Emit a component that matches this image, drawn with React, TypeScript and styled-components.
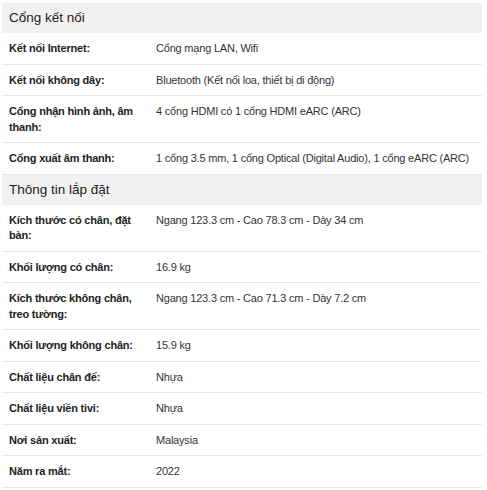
import React from 'react'
import styled, { createGlobalStyle } from 'styled-components'

const GlobalStyle = createGlobalStyle`
body {
  margin: 0;
  background: #fff;
  font-family: "Liberation Sans", Arial, sans-serif;
}
`

const Wrapper = styled.div`
padding: 3px 5px 0 2px;
`

const Table = styled.div`
width: 480px;
display: flex;
flex-direction: column;
`

const GroupTitle = styled.div`
background-color: #f1f1f1;
color: #222;
font-size: 13.5px;
line-height: 30px;
height: 30px;
padding: 0 7px;
`

const Row = styled.div`
display: grid;
grid-template-columns: 147px 1fr;
border-bottom: 1px solid #e6e6e6;
padding: 8px 0 7px 7px;
font-size: 11px;
line-height: 15.5px;
letter-spacing: -0.2px;
`

const Label = styled.div`
color: #222;
font-weight: 600;
padding-right: 8px;
`

const Value = styled.div`
color: #333;
`

type Spec = { label: string; value: string }

const groups: { title: string; specs: Spec[] }[] = [
  {
    title: 'Cổng kết nối',
    specs: [
      { label: 'Kết nối Internet:', value: 'Cổng mạng LAN, Wifi' },
      { label: 'Kết nối không dây:', value: 'Bluetooth (Kết nối loa, thiết bị di động)' },
      { label: 'Cổng nhận hình ảnh, âm thanh:', value: '4 cổng HDMI có 1 cổng HDMI eARC (ARC)' },
      { label: 'Cổng xuất âm thanh:', value: '1 cổng 3.5 mm, 1 cổng Optical (Digital Audio), 1 cổng eARC (ARC)' },
    ],
  },
  {
    title: 'Thông tin lắp đặt',
    specs: [
      { label: 'Kích thước có chân, đặt bàn:', value: 'Ngang 123.3 cm - Cao 78.3 cm - Dày 34 cm' },
      { label: 'Khối lượng có chân:', value: '16.9 kg' },
      { label: 'Kích thước không chân, treo tường:', value: 'Ngang 123.3 cm - Cao 71.3 cm - Dày 7.2 cm' },
      { label: 'Khối lượng không chân:', value: '15.9 kg' },
      { label: 'Chất liệu chân đế:', value: 'Nhựa' },
      { label: 'Chất liệu viền tivi:', value: 'Nhựa' },
      { label: 'Nơi sản xuất:', value: 'Malaysia' },
      { label: 'Năm ra mắt:', value: '2022' },
    ],
  },
]

export default function App() {
  return (
    <Wrapper>
      <GlobalStyle />
      <Table>
        {groups.map((group) => (
          <React.Fragment key={group.title}>
            <GroupTitle>{group.title}</GroupTitle>
            {group.specs.map((spec) => (
              <Row key={spec.label}>
                <Label>{spec.label}</Label>
                <Value>{spec.value}</Value>
              </Row>
            ))}
          </React.Fragment>
        ))}
      </Table>
    </Wrapper>
  )
}
